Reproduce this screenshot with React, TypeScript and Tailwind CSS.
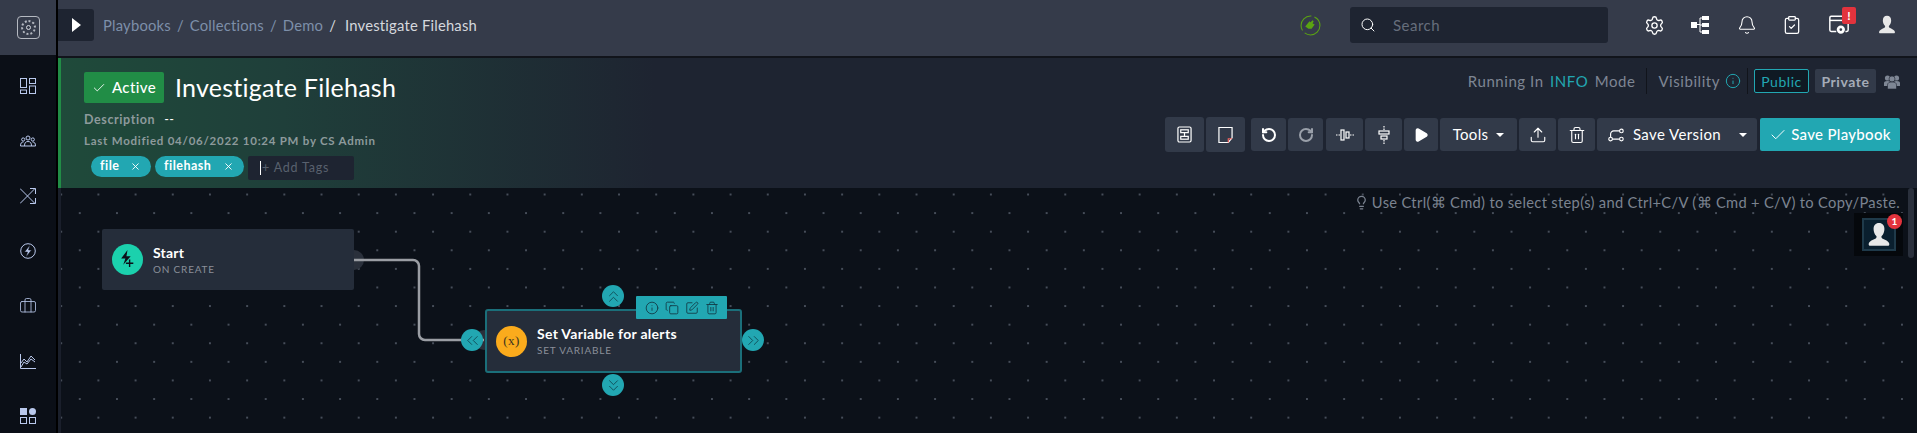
import { Bell, Check, ChevronsLeft, ChevronsRight, ChevronsUp, ChevronsDown, ClipboardCheck, Info, Copy, Lightbulb, Play, RotateCcw, RotateCw, Search, Settings, SquarePen, Trash2, Upload, X, Briefcase } from 'lucide-react';
import type { ReactNode } from 'react';

const font = { fontFamily: 'Lato, sans-serif' };

function DashIcon() {
  return (
    <svg viewBox="0 0 16 16" className="h-4 w-4" fill="none" stroke="#b9c8ec" strokeWidth="1">
      <rect x=".5" y=".5" width="6" height="9" />
      <rect x="9.500" y=".5" width="6" height="5" />
      <rect x=".5" y="12" width="6" height="3.500" />
      <rect x="9.500" y="8" width="6" height="7.500" />
    </svg>
  );
}

function ChartIcon() {
  return (
    <svg viewBox="0 0 16 16" className="h-4 w-4" fill="none" stroke="#b9c8ec" strokeWidth="1">
      <path d="M.5 1v14.500H16" />
      <path d="M1 10l3-4 3 3 4-6 4 4" />
      <path d="M1 14l3-5 3 2 4-5 4 3" />
    </svg>
  );
}

function AppsIcon() {
  return (
    <svg viewBox="0 0 16 16" className="h-4 w-4" fill="#b9c8ec">
      <rect x="0" y="0" width="7" height="7" />
      <circle cx="12.500" cy="3.500" r="3.500" />
      <rect x=".5" y="9.500" width="6" height="6" fill="none" stroke="#b9c8ec" />
      <rect x="9.500" y="9.500" width="6" height="6" fill="none" stroke="#b9c8ec" />
    </svg>
  );
}

function BoltCircle() {
  return (
    <svg viewBox="0 0 16 16" className="h-4 w-4" fill="none" stroke="#b9c8ec" strokeWidth="1">
      <circle cx="8" cy="8" r="7.300" />
      <path d="M10 2L4.500 9h3L6 14l5.500-7h-3z" fill="#b9c8ec" stroke="#0b0f17" strokeWidth=".5" />
    </svg>
  );
}

function TeamIcon() {
  return (
    <svg viewBox="0 0 16 12" className="h-3 w-4" fill="none" stroke="#b9c8ec" strokeWidth="1">
      <circle cx="8" cy="3" r="2" />
      <circle cx="3.200" cy="4.500" r="1.600" />
      <circle cx="12.800" cy="4.500" r="1.600" />
      <path d="M.5 11c0-3 1-4 3-4M15.500 11c0-3-1-4-3-4M4.500 11c0-3 1-4.500 3.500-4.500S11.500 8 11.500 11M.5 11h15" />
    </svg>
  );
}

function SwapIcon() {
  return (
    <svg viewBox="0 0 16 16" className="h-4 w-4" fill="none" stroke="#b9c8ec" strokeWidth="1">
      <path d="M0 15.500L15 .5M10 .5h5.500V6M0 .5l15 15M10 15.500h5.500V10" />
    </svg>
  );
}

function TreeIcon() {
  return (
    <svg viewBox="0 0 20 18" className="h-[18px] w-5" fill="#fff">
      <rect x="0" y="6" width="6" height="6" />
      <rect x="11" y="0" width="7" height="4" />
      <rect x="11" y="7" width="7" height="4" />
      <rect x="11" y="14" width="7" height="4" />
      <path d="M6 8.500h3M9 2h2M9 16h2M9 2v14M9 9h2" stroke="#fff" fill="none" />
    </svg>
  );
}

function DeployIcon() {
  return (
    <svg viewBox="0 0 24 24" className="h-[22px] w-[24px]" fill="none" stroke="#fff" strokeWidth="1.600">
      <path d="M9 19H3.500a1.500 1.500 0 0 1-1.500-1.500V4a1.500 1.500 0 0 1 1.500-1.500h17A1.500 1.500 0 0 1 22 4v13.500a1.500 1.500 0 0 1-1.500 1.500H19" />
      <path d="M2 7h20" />
      <circle cx="14" cy="17" r="3" strokeWidth="3" />
    </svg>
  );
}

function Silhouette({ className }: { className: string }) {
  return (
    <svg viewBox="0 0 24 24" className={className} fill="#e8e8e8">
      <path d="M12 1c3.200 0 5 2.400 5 5.500 0 2.500-1 5-2.500 6.500-.5.6-.3 1.700.5 2.200 2.500 1.300 6 2.300 6.500 4.800.2 1-.3 2-1.500 2H4c-1.200 0-1.700-1-1.500-2 .5-2.500 4-3.500 6.500-4.800.8-.5 1-1.600.5-2.200C8 11.500 7 9 7 6.500 7 3.400 8.800 1 12 1z" />
    </svg>
  );
}

function BoltPlus() {
  return (
    <svg viewBox="0 0 16 18" className="h-[19px] w-[17px]">
      <path d="M8 0L2 8h4l-2 6 7-8H7z" fill="#0c1119" />
      <path d="M10 9v7M6.500 12.500h7" stroke="#0c1119" strokeWidth="1.300" fill="none" />
    </svg>
  );
}

function LayoutToolIcon() {
  return (
    <svg viewBox="0 0 16 18" className="h-[17px] w-[15px]" fill="none" stroke="#fff" strokeWidth="1.300">
      <rect x="1" y="1" width="14" height="16" rx="1.500" />
      <rect x="4" y="4" width="8" height="3" />
      <rect x="4" y="11" width="8" height="3" />
      <path d="M8 7v4" />
    </svg>
  );
}

function NoteIcon() {
  return (
    <svg viewBox="0 0 16 18" className="h-[18px] w-[15px]" fill="none" stroke="#fff" strokeWidth="1.300">
      <path d="M1 1h14v11l-4 5H1z" />
      <path d="M11 17v-4h4" stroke="#f0635f" />
    </svg>
  );
}

function AlignIcon({ vertical }: { vertical?: boolean }) {
  return (
    <svg viewBox="0 0 18 18" className={vertical ? 'h-[18px] w-[18px] rotate-90' : 'h-[18px] w-[18px]'} fill="none" stroke="#fff" strokeWidth="1.200">
      <path d="M0 9h4M14 9h4" strokeDasharray="1.500 1" />
      <rect x="5" y="4" width="3" height="10" />
      <rect x="10" y="6" width="3" height="6" />
    </svg>
  );
}

function VersionIcon() {
  return (
    <svg viewBox="0 0 20 16" className="h-4 w-[18px]" fill="none" stroke="#fff" strokeWidth="1.300">
      <circle cx="4" cy="12.500" r="2" />
      <circle cx="16" cy="3.500" r="2" />
      <circle cx="16" cy="12.500" r="2" />
      <path d="M14 3.500H7.500a3.500 3.500 0 0 0-3.500 3.500v3.500M6 12.500h8" />
    </svg>
  );
}

function GroupIcon() {
  return (
    <svg viewBox="0 0 16 15" className="ml-[8px] h-[15px] w-[16px]" fill="#7e8694">
      <circle cx="3.500" cy="4" r="2.600" />
      <circle cx="12.500" cy="4" r="2.600" />
      <path d="M0 12V9q0-2 3.500-2T7 9v3zM9 12V9q0-2 3.500-2T16 9v3z" />
      <circle cx="8" cy="5" r="3" stroke="#1e2431" strokeWidth=".6" />
      <path d="M3.500 15v-4q0-3 4.500-3t4.500 3v4z" stroke="#1e2431" strokeWidth=".6" />
    </svg>
  );
}

function ToolBtn({ w, h = 'h-[33px]', children }: { w: string; h?: string; children: ReactNode }) {
  return <button className={`flex ${h} ${w} items-center justify-center rounded-[3px] bg-[#323a49] text-white`}>{children}</button>;
}

function Tag({ label, w }: { label: string; w: string }) {
  return (
    <span className={`flex h-[21px] ${w} items-center justify-between rounded-full bg-[#22a7b2] pl-[9px] pr-[10px] text-[12.500px] font-bold tracking-[0.5px] text-white`}>
      {label}
      <X className="h-[11px] w-[11px]" strokeWidth={2} />
    </span>
  );
}

function Port({ className, children }: { className: string; children: ReactNode }) {
  return <div className={`absolute flex h-[22px] w-[22px] items-center justify-center rounded-full bg-[#22a7b2] text-[#0d3d47] ${className}`}>{children}</div>;
}

export default function App() {
  const nav = [<DashIcon key="a" />, <TeamIcon key="b" />, <SwapIcon key="c" />, <BoltCircle key="d" />, <Briefcase key="e" className="h-[18px] w-[18px]" color="#b9c8ec" strokeWidth={1.100} />, <ChartIcon key="f" />, <AppsIcon key="g" />];

  return (
    <div className="flex h-[433px] w-[1917px] overflow-hidden bg-black text-white" style={font}>
      {/* Side nav */}
      <aside className="flex w-[56px] shrink-0 flex-col bg-[#0b0f17]">
        <div className="flex h-[55px] shrink-0 items-center justify-center bg-[#353b4a]">
          <div className="flex h-[23px] w-[23px] items-center justify-center rounded-[4px] border border-[#b5b9c1]">
            <div className="flex h-[15px] w-[15px] items-center justify-center rounded-full border-2 border-dotted border-[#b5b9c1]">
              <div className="h-[5px] w-[5px] rounded-full border border-[#d5d8de]" />
            </div>
          </div>
        </div>
        <div className="h-[3px] shrink-0" />
        {nav.map((icon, i) => (
          <div key={i} className="flex h-[55px] shrink-0 items-center justify-center">{icon}</div>
        ))}
      </aside>

      <main className="ml-[2px] flex min-w-0 flex-1 flex-col">
        {/* Top bar */}
        <header className="flex h-[56px] shrink-0 items-center bg-[#353b4a] pb-[6px]">
          <button className="flex h-[32px] w-[36px] items-center justify-center rounded-r-[3px] bg-[#1e2431]">
            <svg viewBox="0 0 9 14" className="h-[14px] w-[9px]" fill="#fff"><path d="M0 0l9 7-9 7z" /></svg>
          </button>
          <nav className="ml-[9px] flex items-center text-[14.800px] tracking-[0.2px] text-[#7d8fa9]">
            <span>Playbooks</span>
            <span className="mx-[6px]">/</span>
            <span>Collections</span>
            <span className="mx-[6px]">/</span>
            <span>Demo</span>
            <span className="ml-[6px] text-[#d5d8de]">/</span>
            <span className="ml-[9px] text-[#d5d8de]">Investigate Filehash</span>
          </nav>
          <svg viewBox="0 0 20 20" className="ml-auto h-[21px] w-[21px]">
            <circle cx="10" cy="10" r="9" fill="none" stroke="#5aa312" strokeWidth="1" strokeDasharray="20 3" />
            <path d="M5 11l4-5 1 1 2-2 1 1-1 2 2 1-3 4-3 0z" fill="#5aa312" />
          </svg>
          <div className="ml-[29px] flex h-[36px] w-[258px] items-center rounded-[3px] bg-[#1e2431] pl-[10px]">
            <Search className="h-[16px] w-[16px]" strokeWidth={1.500} />
            <span className="ml-[17px] text-[15px] tracking-[0.5px] text-[#666e7c]">Search</span>
          </div>
          <div className="ml-[36px] flex items-center pr-[20px]">
            <Settings className="h-[21px] w-[21px]" strokeWidth={1.500} />
            <div className="ml-[26px]"><TreeIcon /></div>
            <Bell className="ml-[26px] h-[20px] w-[20px]" strokeWidth={1.300} />
            <ClipboardCheck className="ml-[25px] h-[20px] w-[20px]" strokeWidth={1.500} />
            <div className="relative ml-[25px]">
              <DeployIcon />
              <span className="absolute -right-[5px] -top-[7px] flex h-[17px] w-[14px] items-center justify-center rounded-[2px] bg-[#e2333d] text-[12px] font-bold">!</span>
            </div>
            <Silhouette className="ml-[26px] h-[20px] w-[20px]" />
          </div>
        </header>
        <div className="h-[2px] shrink-0 bg-[#11141b]" />

        {/* Playbook header */}
        <section className="flex h-[130px] shrink-0 justify-between border-l-[3px] border-[#218d46] bg-[linear-gradient(90deg,#1f4a3a_0%,#1f3f3a_12%,#1e2431_32%)] pr-[17px]">
          <div className="pl-[23px] pt-[14px]">
            <div className="flex items-center">
              <span className="flex h-[31px] w-[80px] items-center justify-center gap-[6px] rounded-[2px] bg-[#218d46] text-[15px] font-medium tracking-[0.4px]">
                <Check className="h-[14px] w-[14px]" strokeWidth={1.500} />
                Active
              </span>
              <h1 className="ml-[11px] text-[25px] leading-[31px] tracking-[0.25px]">Investigate Filehash</h1>
            </div>
            <div className="mt-[8px] flex items-baseline text-[12.500px] font-bold tracking-[0.6px] text-[#8d9a9c]">
              Description <span className="ml-[9px] font-normal text-white">--</span>
            </div>
            <div className="mt-[2px] text-[11.500px] font-bold tracking-[0.75px] text-[#8d9a9c]">Last Modified 04/06/2022 10:24 PM by CS Admin</div>
            <div className="mt-[7px] flex items-start gap-[4px] pl-[7px]">
              <Tag label="file" w="w-[60px]" />
              <Tag label="filehash" w="w-[89px]" />
              <div className="flex h-[24px] w-[106px] items-center rounded-[2px] bg-[#1e2431] pl-[12px] text-[12.500px] tracking-[0.8px] text-[#59616e]">
                <span className="mr-[1px] h-[14px] w-px bg-white" />+ Add Tags
              </div>
            </div>
          </div>

          <div className="flex flex-col items-end pt-[10px]">
            <div className="flex h-[26px] items-center text-[15px] tracking-[0.55px] text-[#7e8694]">
              <span>Running In <span className="mx-[2px] text-[#22a7b2]">INFO</span> Mode</span>
              <span className="ml-[11px] h-[26px] w-px bg-[#11141b]" />
              <span className="ml-[11px]">Visibility</span>
              <Info className="ml-[5px] h-[16px] w-[16px] text-[#22a7b2]" strokeWidth={1.500} />
              <span className="ml-[6px] h-[26px] w-px bg-[#11141b]" />
              <span className="ml-[6px] flex h-[24px] w-[55px] items-center justify-center rounded-[2px] border border-[#22a7b2] bg-[#0f1923] text-[14px] text-[#22a7b2]">Public</span>
              <span className="ml-[6px] flex h-[24px] w-[61px] items-center justify-center rounded-[2px] bg-[#323a49] text-[14px] font-bold text-[#a5acb8]">Private</span>
              <GroupIcon />
            </div>
            <div className="mt-[23px] flex items-center gap-[2px]">
              <ToolBtn w="w-[39px]" h="h-[35px]"><LayoutToolIcon /></ToolBtn>
              <ToolBtn w="w-[39px]" h="h-[35px]"><NoteIcon /></ToolBtn>
              <ToolBtn w="ml-[4px] w-[35px]"><RotateCcw className="h-[16px] w-[16px]" strokeWidth={3} /></ToolBtn>
              <ToolBtn w="w-[35px]"><RotateCw className="h-[16px] w-[16px] text-[#9aa0aa]" strokeWidth={3} /></ToolBtn>
              <ToolBtn w="ml-px w-[37px]"><AlignIcon /></ToolBtn>
              <ToolBtn w="w-[37px]"><AlignIcon vertical /></ToolBtn>
              <ToolBtn w="w-[34px]"><Play className="h-[16px] w-[16px]" fill="#fff" /></ToolBtn>
              <ToolBtn w="w-[77px]">
                <span className="text-[15px] tracking-[0.3px]">Tools</span>
                <span className="ml-[8px] h-0 w-0 border-x-[4px] border-t-[4px] border-x-transparent border-t-white" />
              </ToolBtn>
              <ToolBtn w="w-[37px]"><Upload className="h-[18px] w-[18px]" strokeWidth={1.500} /></ToolBtn>
              <ToolBtn w="w-[37px]"><Trash2 className="h-[18px] w-[18px]" strokeWidth={1.500} /></ToolBtn>
              <ToolBtn w="w-[160px]">
                <VersionIcon />
                <span className="ml-[8px] text-[15px] tracking-[0.4px]">Save Version</span>
                <span className="ml-[18px] h-0 w-0 border-x-[4px] border-t-[4px] border-x-transparent border-t-white" />
              </ToolBtn>
              <button className="ml-px flex h-[33px] w-[140px] items-center justify-center gap-[4px] rounded-[2px] bg-[#22a7b2] text-[15px] font-medium tracking-[0.3px]">
                <Check className="h-[18px] w-[18px]" strokeWidth={1.300} />
                Save Playbook
              </button>
            </div>
          </div>
        </section>

        {/* Canvas */}
        <section className="relative min-h-0 flex-1 border-l-[3px] border-[#1a1f2b] bg-[#0c1119] bg-[radial-gradient(circle,#464d59_0.8px,transparent_1.1px),radial-gradient(circle,#464d59_0.8px,transparent_1.1px)] bg-[length:37.200px_37.200px] bg-[position:18.800px_25.100px,0.200px_6.500px]">
          <p className="absolute right-[17px] top-[3px] flex items-center text-[14.700px] tracking-[0.32px] text-[#7b8390]">
            <Lightbulb className="mr-[3px] h-[15px] w-[15px]" />
            Use Ctrl(⌘ Cmd) to select step(s) and Ctrl+C/V (⌘ Cmd + C/V) to Copy/Paste.
          </p>
          <div className="absolute right-[3px] top-0 h-[70px] w-[6px] rounded-full bg-[#2a303c]" />

          <div className="absolute right-[14px] top-[25px] flex h-[43px] w-[49px] items-center justify-center bg-[#05080c]">
            <div className="flex h-[33px] w-[34px] items-center justify-center border-2 border-[#1f3a4a] bg-[#0a1f2e]">
              <Silhouette className="h-[26px] w-[26px]" />
            </div>
            <span className="absolute right-[1px] top-[1px] flex h-[15px] w-[15px] items-center justify-center rounded-full bg-[#e2333d] text-[10px] font-bold">1</span>
          </div>

          {/* Connector */}
          <svg className="absolute left-[-3px] top-0 h-[245px] w-[500px]" fill="none">
            <circle cx="296" cy="72" r="10" fill="#2a303b" />
            <circle cx="426" cy="152" r="10" fill="#2a303b" />
            <path d="M296 72h59a6 6 0 0 1 6 6v68a6 6 0 0 0 6 6h59" stroke="#9b9ea4" strokeWidth="2.500" />
          </svg>

          {/* Start node */}
          <div className="absolute left-[41px] top-[41px] flex h-[61px] w-[252px] items-center rounded-[2px] bg-[#252d3a] pl-[10px]">
            <div className="flex h-[31px] w-[31px] items-center justify-center rounded-full bg-[#1bd1ad]"><BoltPlus /></div>
            <div className="ml-[10px]">
              <div className="text-[14px] font-bold leading-[18px] tracking-[0.2px]">Start</div>
              <div className="text-[10px] leading-[14px] tracking-[0.8px] text-[#8a8f99]">ON CREATE</div>
            </div>
          </div>

          {/* Set variable node */}
          <div className="absolute left-[424px] top-[121px] flex h-[64px] w-[257px] items-center rounded-[3px] border-2 border-[#1b6f7a] bg-[#252d3a] pl-[9px]">
            <div className="flex h-[31px] w-[31px] items-center justify-center rounded-full bg-[#fbab1c] text-[13px] font-medium tracking-[0.5px] text-[#3a3320]" style={{ fontFamily: '"Liberation Serif", serif' }}>(x)</div>
            <div className="ml-[10px]">
              <div className="text-[14px] font-bold leading-[18px] tracking-[0.3px]">Set Variable for alerts</div>
              <div className="text-[10px] leading-[14px] tracking-[0.8px] text-[#8a8f99]">SET VARIABLE</div>
            </div>
          </div>
          <div className="absolute left-[575px] top-[108px] flex h-[23px] w-[91px] items-center justify-center gap-[6px] rounded-[1px] bg-[#22a7b2] text-[#123b47]">
            <Info className="h-[14px] w-[14px]" strokeWidth={1.500} />
            <Copy className="h-[14px] w-[14px]" strokeWidth={1.500} />
            <SquarePen className="h-[14px] w-[14px]" strokeWidth={1.500} />
            <Trash2 className="h-[14px] w-[14px]" strokeWidth={1.500} />
          </div>
          <Port className="left-[400px] top-[141px]"><ChevronsLeft className="h-[19px] w-[19px]" strokeWidth={1} /></Port>
          <Port className="left-[681px] top-[141px]"><ChevronsRight className="h-[19px] w-[19px]" strokeWidth={1} /></Port>
          <Port className="left-[541px] top-[97px]"><ChevronsUp className="h-[19px] w-[19px]" strokeWidth={1} /></Port>
          <Port className="left-[541px] top-[186px]"><ChevronsDown className="h-[19px] w-[19px]" strokeWidth={1} /></Port>
        </section>
      </main>
    </div>
  );
}
